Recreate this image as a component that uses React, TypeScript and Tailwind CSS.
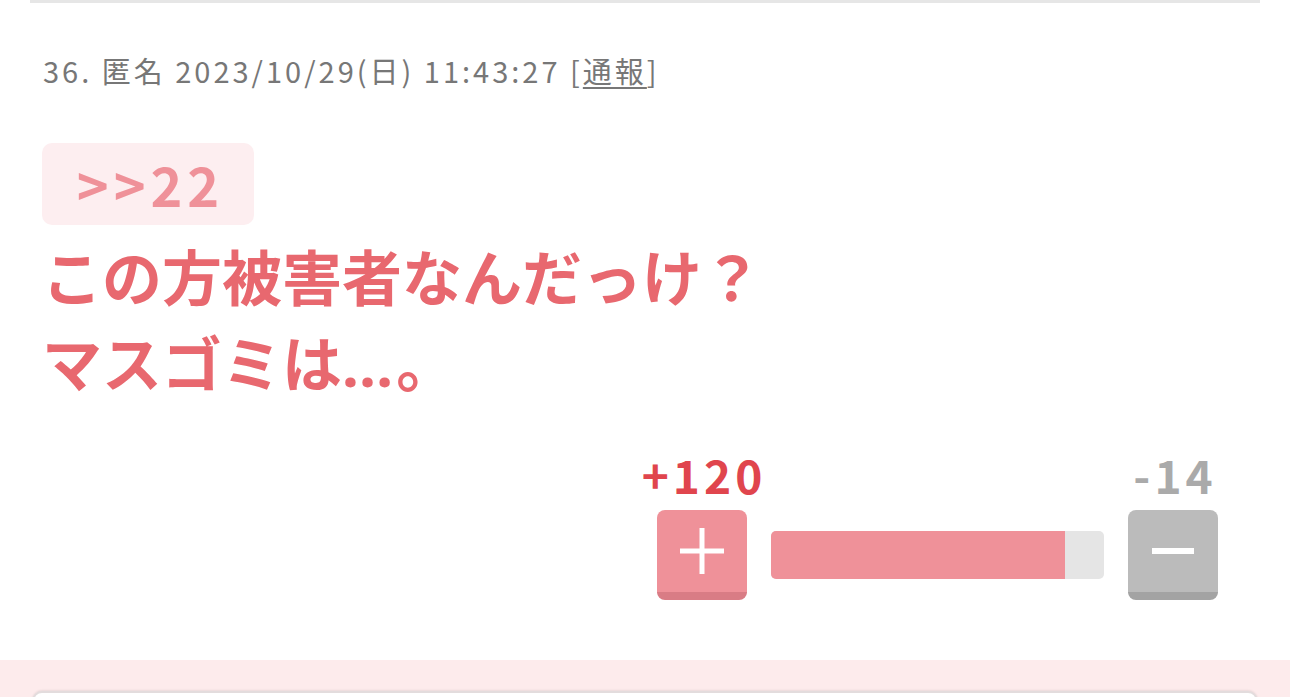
import React from "react";

const jp = { fontFamily: '"Noto Sans CJK JP", "Noto Sans", sans-serif' };

export default function App() {
  const up = 120;
  const down = 14;
  return (
    <div className="w-full bg-white" style={jp}>
      <div className="mx-[30px] border-t-[3px] border-[#e6e6e6]">
        <div className="pt-[47px] pl-[13px] text-[29px] leading-[40px] text-[#777777] tracking-[3px] whitespace-nowrap">
          36. 匿名 2023/10/29(日) 11:43:27 [<span className="underline underline-offset-4">通報</span>]
        </div>
        <div className="mt-[53px] ml-[12px] w-[212px] h-[82px] rounded-[10px] bg-[#fdeef0] flex items-center justify-center pl-[5px] text-[54px] leading-[60px] font-bold text-[#ef9199] tracking-[5px]">
          &gt;&gt;22
        </div>
        <div className="mt-[7px] pl-[12px] text-[60px] leading-[86px] font-bold text-[#e8686f] whitespace-nowrap">
          <div>この方被害者なんだっけ？</div>
          <div>
            マスゴミは<span className="tracking-[3px]" style={{ fontFamily: '"Noto Sans", sans-serif' }}>…</span>。
          </div>
        </div>
        <div className="mt-[45px] pb-[60px] flex justify-end pr-[42px]">
          <div className="flex items-end">
            <div className="flex flex-col items-center w-[90px]">
              <div className="text-[46px] leading-[44px] font-bold text-[#e0454d] whitespace-nowrap tracking-[4px] pl-[4px]">+{up}</div>
              <button className="mt-[14px] w-[90px] h-[90px] rounded-[8px] bg-[#ef9199] border-b-[8px] border-[#d97c85] flex items-center justify-center">
                <svg width="44" height="46" viewBox="0 0 44 46">
                  <rect x="0" y="20.5" width="44" height="5" fill="white" />
                  <rect x="19.5" y="0" width="5" height="46" fill="white" />
                </svg>
              </button>
            </div>
            <div className="mx-[24px] mb-[21px] w-[333px] h-[48px] rounded-[5px] bg-[#e5e5e5] overflow-hidden">
              <div className="h-full w-[88.3%] bg-[#ef9199]" />
            </div>
            <div className="flex flex-col items-center w-[90px]">
              <div className="text-[46px] leading-[44px] font-bold text-[#aaaaaa] whitespace-nowrap tracking-[4px] pl-[4px]">-{down}</div>
              <button className="mt-[14px] w-[90px] h-[90px] rounded-[8px] bg-[#bbbbbb] border-b-[8px] border-[#a3a3a3] flex items-center justify-center">
                <svg width="44" height="46" viewBox="0 0 44 46">
                  <rect x="1" y="20" width="42" height="6" fill="white" />
                </svg>
              </button>
            </div>
          </div>
        </div>
      </div>
      <div className="bg-[#fdebec] pt-[31px] px-[32px] h-[200px]">
        <div className="h-[100px] rounded-t-[10px] border-2 border-[#e3dcdd] bg-white shadow-[0_-1px_2px_rgba(0,0,0,0.08)]" />
      </div>
    </div>
  );
}
